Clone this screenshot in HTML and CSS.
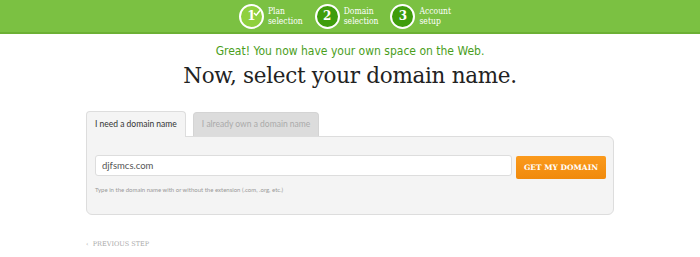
FILE: index.html
```html
<!DOCTYPE html>
<html>
<head>
<meta charset="utf-8">
<link rel="stylesheet" href="styles.css">
</head>
<body>
<header class="topbar">
  <div class="steps">
    <div class="step">
      <span class="circle done">1<svg class="check" viewBox="0 0 8 8" width="8" height="8"><path d="M1 4 L3.2 6.2 L7 1.5" fill="none" stroke="#fff" stroke-width="1.5"/></svg></span>
      <span class="label">Plan<br>selection</span>
    </div>
    <div class="step">
      <span class="circle">2</span>
      <span class="label">Domain<br>selection</span>
    </div>
    <div class="step">
      <span class="circle">3</span>
      <span class="label">Account<br>setup</span>
    </div>
  </div>
</header>
<main class="main">
  <p class="lead">Great! You now have your own space on the Web.</p>
  <h1 class="title">Now, select your domain name.</h1>
  <div class="tabs">
    <div class="tab active">I need a domain name</div>
    <div class="tab">I already own a domain name</div>
  </div>
  <div class="panel">
    <div class="row">
      <div class="input">djfsmcs.com</div>
      <button class="btn">GET MY DOMAIN</button>
    </div>
    <p class="help">Type in the domain name with or without the extension (.com, .org, etc.)</p>
  </div>
  <a class="prev">‹&nbsp;&nbsp;PREVIOUS STEP</a>
</main>
</body>
</html>
```
FILE: styles.css
```css
html, body { margin: 0; padding: 0; background: #fff; }
body { font-family: "DejaVu Serif", serif; width: 700px; height: 257px; overflow: hidden; }
.topbar {
  height: 32px;
  background: #7bc142;
  border-bottom: 2px solid #6cb034;
  display: flex;
  justify-content: center;
  align-items: center;
}
.steps { display: flex; gap: 12px; margin-right: 10px; }
.step { display: flex; align-items: center; gap: 4px; }
.circle {
  position: relative;
  width: 21px; height: 21px;
  border: 2px solid #fff;
  border-radius: 50%;
  background: #3f9d0c;
  color: #fff;
  font: bold 12px "DejaVu Serif", serif;
  display: flex; align-items: center; justify-content: center;
}
.circle.done { background: #8fd03e; }
.check { position: absolute; right: 1px; top: 3px; }
.label {
  color: #fff;
  font: 8.5px/10px "DejaVu Serif Condensed", "DejaVu Serif", serif;
}
.main { width: 528px; margin: 0 auto; }
.lead {
  margin: 10px 0 0;
  text-align: center;
  color: #4a9e1c;
  font: 12px/14px "DejaVu Sans Condensed", "DejaVu Sans", sans-serif;
}
.title {
  margin: 3px 0 0;
  text-align: center;
  color: #222;
  font: 300 21.5px/30px "DejaVu Serif", serif;
  letter-spacing: -0.3px;
}
.tabs { display: flex; gap: 7px; margin-top: 20px; align-items: flex-end; }
.tab {
  font: 8.5px/23px "Lato", sans-serif;
  padding: 0 8px;
  background: #dcdcdc;
  color: #aaa;
  border: 1px solid #d4d4d4;
  border-bottom: none;
  border-radius: 4px 4px 0 0;
  height: 23px;
}
.tab.active {
  background: #f4f4f4;
  color: #333;
  height: 25px;
  line-height: 25px;
  margin-bottom: -1px;
  position: relative;
  border-color: #ddd;
}
.panel {
  background: #f4f4f4;
  border: 1px solid #ddd;
  border-radius: 0 6px 6px 6px;
  padding: 18px 7px 17px 8px;
  height: 42px;
}
.row { display: flex; gap: 4px; align-items: flex-start; }
.input {
  flex: 1;
  height: 19px;
  background: #fff;
  border: 1px solid #ddd;
  border-radius: 3px;
  font: 9.5px/19px "Lato", sans-serif;
  color: #555;
  padding-left: 6px;
}
.btn {
  margin-top: 1px;
  width: 90px; height: 23px;
  border: none;
  border-radius: 2px;
  background: linear-gradient(#fb9a1c, #f08a0c);
  color: #fff;
  font: bold 7.5px "DejaVu Serif", serif;
  padding: 0;
}
.help {
  margin: 7px 0 0;
  font: 6px "Lato", sans-serif;
  color: #999;
}
.prev {
  display: block;
  margin-top: 25px;
  font: 6.5px "DejaVu Serif", serif;
  color: #aaa;
}
```
